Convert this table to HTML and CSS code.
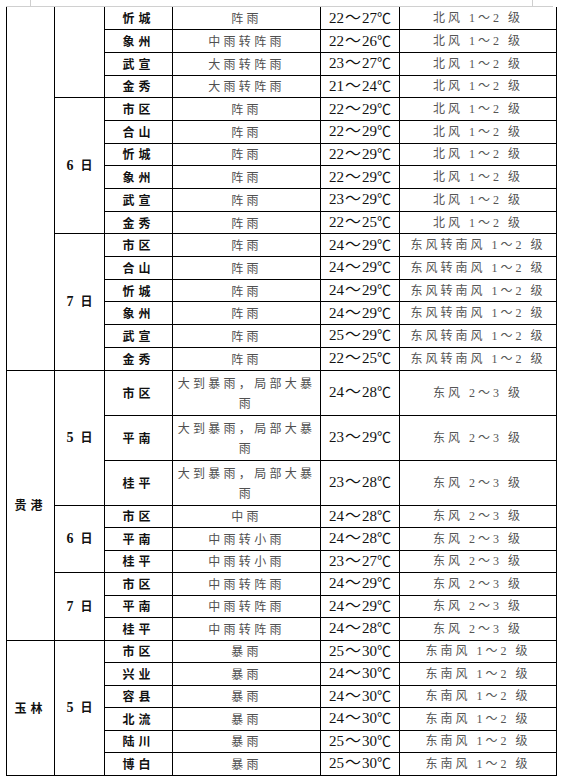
FILE: index.html
```html
<!DOCTYPE html>
<html lang="zh-CN">
<head>
<meta charset="utf-8">
<title>天气预报</title>
<link rel="stylesheet" href="styles.css">
</head>
<body>
<div class="page">
  <span class="mark mark-left"></span>
  <span class="mark mark-right"></span>
  <div class="margin-line"></div>
  <table class="forecast">
    <colgroup>
      <col class="c-city"><col class="c-date"><col class="c-dist"><col class="c-wx"><col class="c-temp"><col class="c-wind">
    </colgroup>
    <tbody>
      <tr class="r1"><td class="city" rowspan="16"></td><td class="date" rowspan="4"></td><td class="dist">忻城</td><td class="wx">阵雨</td><td class="temp">22<span class="t">～</span>27<span class="d">℃</span></td><td class="wind">北风 1～2 级</td></tr>
      <tr class="r1"><td class="dist">象州</td><td class="wx">中雨转阵雨</td><td class="temp">22<span class="t">～</span>26<span class="d">℃</span></td><td class="wind">北风 1～2 级</td></tr>
      <tr class="r1"><td class="dist">武宣</td><td class="wx">大雨转阵雨</td><td class="temp">23<span class="t">～</span>27<span class="d">℃</span></td><td class="wind">北风 1～2 级</td></tr>
      <tr class="r1"><td class="dist">金秀</td><td class="wx">大雨转阵雨</td><td class="temp">21<span class="t">～</span>24<span class="d">℃</span></td><td class="wind">北风 1～2 级</td></tr>

      <tr class="r1"><td class="date" rowspan="6"><span class="num">6</span>日</td><td class="dist">市区</td><td class="wx">阵雨</td><td class="temp">22<span class="t">～</span>29<span class="d">℃</span></td><td class="wind">北风 1～2 级</td></tr>
      <tr class="r1"><td class="dist">合山</td><td class="wx">阵雨</td><td class="temp">22<span class="t">～</span>29<span class="d">℃</span></td><td class="wind">北风 1～2 级</td></tr>
      <tr class="r1"><td class="dist">忻城</td><td class="wx">阵雨</td><td class="temp">22<span class="t">～</span>29<span class="d">℃</span></td><td class="wind">北风 1～2 级</td></tr>
      <tr class="r1"><td class="dist">象州</td><td class="wx">阵雨</td><td class="temp">22<span class="t">～</span>29<span class="d">℃</span></td><td class="wind">北风 1～2 级</td></tr>
      <tr class="r1"><td class="dist">武宣</td><td class="wx">阵雨</td><td class="temp">23<span class="t">～</span>29<span class="d">℃</span></td><td class="wind">北风 1～2 级</td></tr>
      <tr class="r1"><td class="dist">金秀</td><td class="wx">阵雨</td><td class="temp">22<span class="t">～</span>25<span class="d">℃</span></td><td class="wind">北风 1～2 级</td></tr>

      <tr class="r1"><td class="date" rowspan="6"><span class="num">7</span>日</td><td class="dist">市区</td><td class="wx">阵雨</td><td class="temp">24<span class="t">～</span>29<span class="d">℃</span></td><td class="wind">东风转南风 1～2 级</td></tr>
      <tr class="r1"><td class="dist">合山</td><td class="wx">阵雨</td><td class="temp">24<span class="t">～</span>29<span class="d">℃</span></td><td class="wind">东风转南风 1～2 级</td></tr>
      <tr class="r1"><td class="dist">忻城</td><td class="wx">阵雨</td><td class="temp">24<span class="t">～</span>29<span class="d">℃</span></td><td class="wind">东风转南风 1～2 级</td></tr>
      <tr class="r1"><td class="dist">象州</td><td class="wx">阵雨</td><td class="temp">24<span class="t">～</span>29<span class="d">℃</span></td><td class="wind">东风转南风 1～2 级</td></tr>
      <tr class="r1"><td class="dist">武宣</td><td class="wx">阵雨</td><td class="temp">25<span class="t">～</span>29<span class="d">℃</span></td><td class="wind">东风转南风 1～2 级</td></tr>
      <tr class="r1"><td class="dist">金秀</td><td class="wx">阵雨</td><td class="temp">22<span class="t">～</span>25<span class="d">℃</span></td><td class="wind">东风转南风 1～2 级</td></tr>

      <tr class="r2"><td class="city" rowspan="9">贵港</td><td class="date" rowspan="3"><span class="num">5</span>日</td><td class="dist">市区</td><td class="wx">大到暴雨，局部大暴雨</td><td class="temp">24<span class="t">～</span>28<span class="d">℃</span></td><td class="wind">东风 2～3 级</td></tr>
      <tr class="r2"><td class="dist">平南</td><td class="wx">大到暴雨，局部大暴雨</td><td class="temp">23<span class="t">～</span>29<span class="d">℃</span></td><td class="wind">东风 2～3 级</td></tr>
      <tr class="r2"><td class="dist">桂平</td><td class="wx">大到暴雨，局部大暴雨</td><td class="temp">23<span class="t">～</span>28<span class="d">℃</span></td><td class="wind">东风 2～3 级</td></tr>

      <tr class="r3"><td class="date" rowspan="3"><span class="num">6</span>日</td><td class="dist">市区</td><td class="wx">中雨</td><td class="temp">24<span class="t">～</span>28<span class="d">℃</span></td><td class="wind">东风 2～3 级</td></tr>
      <tr class="r3"><td class="dist">平南</td><td class="wx">中雨转小雨</td><td class="temp">24<span class="t">～</span>28<span class="d">℃</span></td><td class="wind">东风 2～3 级</td></tr>
      <tr class="r3"><td class="dist">桂平</td><td class="wx">中雨转小雨</td><td class="temp">23<span class="t">～</span>27<span class="d">℃</span></td><td class="wind">东风 2～3 级</td></tr>

      <tr class="r3"><td class="date" rowspan="3"><span class="num">7</span>日</td><td class="dist">市区</td><td class="wx">中雨转阵雨</td><td class="temp">24<span class="t">～</span>29<span class="d">℃</span></td><td class="wind">东风 2～3 级</td></tr>
      <tr class="r3"><td class="dist">平南</td><td class="wx">中雨转阵雨</td><td class="temp">24<span class="t">～</span>29<span class="d">℃</span></td><td class="wind">东风 2～3 级</td></tr>
      <tr class="r3"><td class="dist">桂平</td><td class="wx">中雨转阵雨</td><td class="temp">24<span class="t">～</span>28<span class="d">℃</span></td><td class="wind">东风 2～3 级</td></tr>

      <tr class="r3"><td class="city" rowspan="6">玉林</td><td class="date" rowspan="6"><span class="num">5</span>日</td><td class="dist">市区</td><td class="wx">暴雨</td><td class="temp">25<span class="t">～</span>30<span class="d">℃</span></td><td class="wind">东南风 1～2 级</td></tr>
      <tr class="r3"><td class="dist">兴业</td><td class="wx">暴雨</td><td class="temp">24<span class="t">～</span>30<span class="d">℃</span></td><td class="wind">东南风 1～2 级</td></tr>
      <tr class="r3"><td class="dist">容县</td><td class="wx">暴雨</td><td class="temp">24<span class="t">～</span>30<span class="d">℃</span></td><td class="wind">东南风 1～2 级</td></tr>
      <tr class="r3"><td class="dist">北流</td><td class="wx">暴雨</td><td class="temp">24<span class="t">～</span>30<span class="d">℃</span></td><td class="wind">东南风 1～2 级</td></tr>
      <tr class="r3"><td class="dist">陆川</td><td class="wx">暴雨</td><td class="temp">25<span class="t">～</span>30<span class="d">℃</span></td><td class="wind">东南风 1～2 级</td></tr>
      <tr class="r3"><td class="dist">博白</td><td class="wx">暴雨</td><td class="temp">25<span class="t">～</span>30<span class="d">℃</span></td><td class="wind">东南风 1～2 级</td></tr>
    </tbody>
  </table>
</div>
</body>
</html>
```

FILE: styles.css
```css
html, body {
  margin: 0;
  padding: 0;
  background: #ffffff;
}

.page {
  position: relative;
  width: 563px;
  padding-top: 6px;
  font-family: "Noto Sans CJK SC", "Liberation Serif", serif;
}

.margin-line {
  height: 1px;
  margin: 0 10px 0 6px;
  background: #d0d0d0;
}

.mark {
  position: absolute;
  top: 0;
  width: 20px;
  height: 6px;
  border-bottom: 1px solid #cfcfcf;
}

.mark-left {
  left: 10px;
  border-right: 1px solid #cfcfcf;
}

.mark-right {
  left: 532px;
  border-left: 1px solid #cfcfcf;
}

.forecast {
  margin-left: 6px;
  width: 550px;
  table-layout: fixed;
  border-collapse: collapse;
  border-top: none;
}

.c-city { width: 48px; }
.c-date { width: 50px; }
.c-dist { width: 68px; }
.c-wx { width: 148px; }
.c-temp { width: 79px; }
.c-wind { width: 157px; }

.forecast td {
  border: 1px solid #000000;
  padding: 0 4px;
  text-align: center;
  vertical-align: middle;
  font-size: 12px;
  line-height: 20px;
  white-space: normal;
}

.forecast tr:first-child td {
  border-top: none;
}

.r1 { height: 22.7px; }
.r2 { height: 45px; }
.r3 { height: 22.5px; }

.city {
  font-weight: 700;
  color: #111111;
  letter-spacing: 4px;
  padding-left: 8px;
}

.date {
  font-weight: 700;
  color: #111111;
  padding-left: 2px;
}

.num {
  font-family: "Liberation Serif", serif;
  font-size: 14px;
  font-weight: 700;
  margin-right: 7px;
}

.dist {
  font-weight: 700;
  color: #111111;
  letter-spacing: 4px;
  padding-left: 8px;
}

.wx {
  color: #505050;
  letter-spacing: 3.3px;
}

.forecast td.temp {
  font-family: "Liberation Serif", serif;
  font-size: 15px;
  line-height: 12px;
  color: #111111;
  white-space: nowrap;
  padding: 0 1px 3px;
}

.temp .t {
  font-family: "Noto Sans CJK SC", sans-serif;
  font-size: 16px;
  font-weight: 400;
  line-height: 12px;
  margin: 0 1px;
}

.temp .d {
  font-family: "Noto Sans CJK SC", sans-serif;
  font-size: 14px;
  font-weight: 400;
  line-height: 12px;
}

.wind {
  color: #555555;
  letter-spacing: 3px;
  font-family: "Liberation Serif", "Noto Sans CJK SC", serif;
  font-size: 12px;
  white-space: nowrap;
}
```
